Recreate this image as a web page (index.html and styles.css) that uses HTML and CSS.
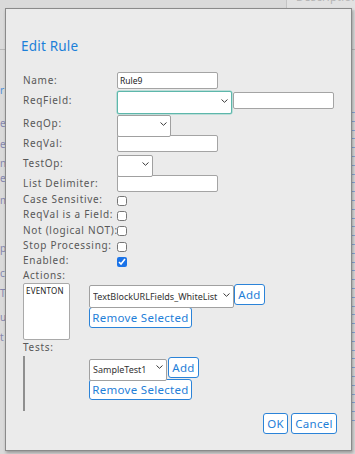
FILE: index.html
```html
<!DOCTYPE html>
<html>
<head>
<meta charset="utf-8">
<link rel="stylesheet" href="styles.css">
</head>
<body>
<div class="backdrop">
  <div class="bg-top">
    <div class="bg-top-left"></div>
    <div class="bg-top-right"><span class="bg-desc">Description:</span></div>
  </div>
  <div class="bg-rule"></div>
  <div class="bg-left">
    <span class="bg-spacer"></span>
    <span class="bg-l bg-blue">r</span>
    <span class="bg-l">e</span>
    <span class="bg-l">e</span>
    <span class="bg-l">nk</span>
    <span class="bg-l">el</span>
    <span class="bg-l">m</span>
    <span class="bg-l">p</span>
    <span class="bg-l">c</span>
    <span class="bg-l">T</span>
    <span class="bg-l">u</span>
    <span class="bg-l">t</span>
  </div>
  <div class="bg-ticks"></div>
</div>

<div class="dialog">
  <h2 class="title">Edit Rule</h2>
  <div class="form">
    <label class="lbl">Name:</label>
    <div class="ctl"><input class="txt w101" value="Rule9"></div>

    <label class="lbl">ReqField:</label>
    <div class="ctl">
      <div class="sel sel-focus w115 h23"><select><option></option></select><svg class="chev" viewBox="0 0 7 4"><path d="M0.5 0.5 L3.5 3.3 L6.5 0.5"/></svg></div>
      <input class="txt w101 ml1" value="">
    </div>

    <label class="lbl">ReqOp:</label>
    <div class="ctl"><div class="sel w54 h22"><select><option></option></select><svg class="chev" viewBox="0 0 7 4"><path d="M0.5 0.5 L3.5 3.3 L6.5 0.5"/></svg></div></div>

    <label class="lbl">ReqVal:</label>
    <div class="ctl"><input class="txt w101" value=""></div>

    <label class="lbl">TestOp:</label>
    <div class="ctl"><div class="sel w36 h22"><select><option></option></select><svg class="chev" viewBox="0 0 7 4"><path d="M0.5 0.5 L3.5 3.3 L6.5 0.5"/></svg></div></div>

    <label class="lbl">List Delimiter:</label>
    <div class="ctl"><input class="txt w101" value=""></div>

    <label class="lbl">Case Sensitive:</label>
    <div class="ctl"><input type="checkbox" class="chk"></div>

    <label class="lbl">ReqVal is a Field:</label>
    <div class="ctl"><input type="checkbox" class="chk"></div>

    <label class="lbl">Not (logical NOT):</label>
    <div class="ctl"><input type="checkbox" class="chk"></div>

    <label class="lbl">Stop Processing:</label>
    <div class="ctl"><input type="checkbox" class="chk"></div>

    <label class="lbl">Enabled:</label>
    <div class="ctl"><input type="checkbox" class="chk" checked></div>
  </div>

  <div class="lbl sec">Actions:</div>
  <div class="lrow">
    <div class="lcol"><div class="listbox">EVENTON</div></div>
    <div class="rcol">
      <div class="line">
        <div class="sel w145 h23"><select><option>TextBlockURLFields_WhiteList</option></select><svg class="chev" viewBox="0 0 7 4"><path d="M0.5 0.5 L3.5 3.3 L6.5 0.5"/></svg></div>
        <button class="btn b-add">Add</button>
      </div>
      <button class="btn b-rem">Remove Selected</button>
    </div>
  </div>

  <div class="lbl sec">Tests:</div>
  <div class="lrow">
    <div class="lcol"><div class="listbox-empty"></div></div>
    <div class="rcol rcol-t">
      <div class="line gap1">
        <div class="sel w78 h22"><select><option>SampleTest1</option></select><svg class="chev" viewBox="0 0 7 4"><path d="M0.5 0.5 L3.5 3.3 L6.5 0.5"/></svg></div>
        <button class="btn b-add">Add</button>
      </div>
      <button class="btn b-rem">Remove Selected</button>
    </div>
  </div>

  <div class="footer">
    <button class="btn b-ok">OK</button>
    <button class="btn b-cancel">Cancel</button>
  </div>
</div>
</body>
</html>
```

FILE: styles.css
```css
* { box-sizing: border-box; }
html, body { margin: 0; padding: 0; }
body {
  width: 355px;
  height: 454px;
  overflow: hidden;
  position: relative;
  background: #dadada;
  font-family: "Noto Sans", "DejaVu Sans", sans-serif;
}

/* ---------- backdrop (page behind the modal) ---------- */
.backdrop { position: absolute; inset: 0; }
.bg-top { display: flex; height: 10px; }
.bg-top-left { width: 287px; border-right: 1px solid #c4c4c4; }
.bg-top-right { flex: 1; background: #e2e2e2; overflow: hidden; }
.bg-desc {
  display: block;
  margin: -10px 0 0 9px;
  font-size: 11px;
  line-height: 14px;
  color: #b4b4b4;
  white-space: nowrap;
  letter-spacing: 0.3px;
}
.bg-rule { height: 1px; background: #b8b8b8; margin-top: 39px; }
.bg-left {
  position: absolute;
  left: 0;
  top: 0;
  width: 7px;
  display: grid;
  grid-template-rows: 85px 33px 21px 19px 15px 22px 48px 25px 20px 24px 20px 10px;
  font-size: 10px;
  line-height: 10px;
  color: #8587ae;
}
.bg-l { white-space: nowrap; }
.bg-blue { color: #4f8fd8; }
.bg-ticks {
  position: absolute;
  right: 0;
  top: 112px;
  width: 3px;
  height: 310px;
  background: repeating-linear-gradient(to bottom, #8aa6d6 0 1px, transparent 1px 8.8px);
}

/* ---------- dialog ---------- */
.dialog {
  position: absolute;
  left: 5px;
  top: 8px;
  width: 347px;
  height: 443px;
  background: #ebebeb;
  border: 1px solid #8a8a8a;
  box-shadow: 1px 2px 3px rgba(0,0,0,0.3);
  padding: 28px 14px 0 17px;
}
.title {
  margin: 0 0 17px -2px;
  font-size: 13.5px;
  line-height: 18px;
  font-weight: 400;
  color: #1b7fd9;
  letter-spacing: 0.2px;
}

.form {
  display: grid;
  grid-template-columns: 94px auto;
  grid-template-rows: 17px 23px 23px 17px 23px 17px repeat(5, 15.3px);
  align-items: center;
}
.lbl {
  font-size: 10px;
  line-height: 15px;
  color: #585858;
  letter-spacing: 0.7px;
  white-space: nowrap;
}
.ctl { display: flex; align-items: center; }

.txt {
  height: 17px;
  border: 1px solid #a4a4a4;
  border-radius: 2px;
  background: #fff;
  padding: 0 2px;
  font-family: "Noto Sans", sans-serif;
  font-size: 8.5px;
  color: #222;
  outline: none;
}
.w101 { width: 101px; }
.ml1 { margin-left: 1px; }

.sel { position: relative; }
.sel select {
  appearance: none;
  -webkit-appearance: none;
  width: 100%;
  height: 100%;
  border: 1px solid #a0a0a0;
  border-radius: 2px;
  background: #fff;
  font-family: "Noto Sans", sans-serif;
  font-size: 9px;
  color: #333;
  padding: 0 0 0 3px;
  margin: 0;
  outline: none;
}
.sel-focus select { border-color: #5db7ab; box-shadow: 0 0 0 0.5px #8fd0c6; }
.chev {
  position: absolute;
  right: 4px;
  top: 50%;
  width: 7px;
  height: 4px;
  margin-top: -2px;
  fill: none;
  stroke: #3a3a3a;
  stroke-width: 1;
}
.w115 { width: 115px; }
.w54 { width: 54px; }
.w36 { width: 36px; }
.w145 { width: 145px; }
.w78 { width: 78px; }
.h23 { height: 23px; }
.h22 { height: 22px; }

.chk {
  width: 10px;
  height: 10px;
  margin: 2px 0 0 0;
  accent-color: #1a73e8;
}

.sec { line-height: 15px; }

.lrow { display: flex; }
.lcol { width: 66px; flex: none; }
.listbox {
  width: 47px;
  height: 57px;
  background: #fff;
  border: 1px solid #a9a9a9;
  border-radius: 2px;
  font-size: 8px;
  line-height: 11px;
  color: #222;
  padding: 1px 2px;
  letter-spacing: 0.2px;
}
.listbox-empty {
  width: 2px;
  height: 55px;
  margin-top: 1px;
  background: #8f8f8f;
}
.rcol {
  display: flex;
  flex-direction: column;
  align-items: flex-start;
  gap: 1px;
}
.rcol-t { padding-top: 1px; }
.line { display: flex; align-items: center; }
.gap1 { gap: 1px; }

.btn {
  height: 21px;
  padding: 0;
  margin: 0;
  border: 1px solid #2b83d8;
  border-radius: 3px;
  background: #fff;
  color: #1f80d8;
  font-family: "Noto Sans", sans-serif;
  font-size: 11.5px;
  line-height: 19px;
  text-align: center;
  letter-spacing: 0.3px;
  white-space: nowrap;
}
.b-add { width: 31px; }
.b-rem { width: 103px; }
.b-ok { width: 25px; }
.b-cancel { width: 46px; }

.footer {
  display: flex;
  justify-content: flex-end;
  gap: 3px;
  margin-top: 2px;
}
```
